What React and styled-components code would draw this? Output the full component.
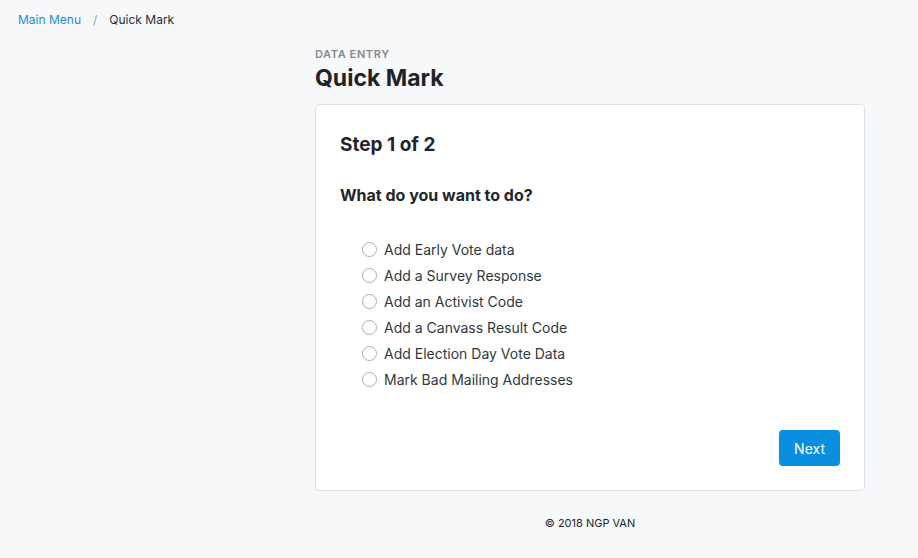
import React from "react";
import styled, { createGlobalStyle } from "styled-components";

const Global = createGlobalStyle`
  html, body { margin: 0; padding: 0; background: #f7f8fa; }
  body { font-family: Inter, "Noto Sans", "Liberation Sans", sans-serif; color: #22262a; }
`;

const Page = styled.div`
  min-height: 558px;
  background: #f7f8fa;
`;

const Breadcrumb = styled.nav`
  display: flex;
  align-items: center;
  gap: 12px;
  padding: 13px 18px 0;
  font-size: 12px;
  line-height: 14px;
`;

const Crumb = styled.span`
  color: ${(p) => (p.$link ? "#1a8cdb" : "#2a2d31")};
`;

const Sep = styled.span`
  color: #9aa0a6;
`;

const Column = styled.main`
  width: 550px;
  margin-left: 315px;
  padding-top: 20px;
`;

const Eyebrow = styled.div`
  font-size: 11px;
  font-weight: 600;
  letter-spacing: 0.6px;
  color: #838a92;
  text-transform: uppercase;
  line-height: 14px;
`;

const Title = styled.h1`
  margin: 2px 0 11px;
  font-size: 23px;
  font-weight: 700;
  line-height: 30px;
  color: #1f2327;
`;

const Card = styled.section`
  background: #fff;
  border: 1px solid #dde1e6;
  border-radius: 4px;
`;

const CardHeader = styled.div`
  padding: 28px 24px 0;
  height: 53px;
  box-sizing: border-box;
`;

const StepTitle = styled.h2`
  margin: 0;
  font-size: 19px;
  font-weight: 700;
  line-height: 24px;
  color: #22262a;
`;

const CardBody = styled.div`
  padding: 27px 24px 24px;
`;

const Question = styled.h3`
  margin: 0 0 31px;
  font-size: 16px;
  font-weight: 700;
  line-height: 20px;
  color: #22262a;
`;

const Options = styled.div`
  display: flex;
  flex-direction: column;
  padding-left: 22px;
`;

const Option = styled.label`
  display: flex;
  align-items: center;
  gap: 7px;
  height: 26px;
  font-size: 14px;
  color: #33373b;
  cursor: pointer;
`;

const Radio = styled.span`
  width: 13px;
  height: 13px;
  border: 1px solid #a9adb2;
  border-radius: 50%;
  background: #fff;
  flex: none;
`;

const Actions = styled.div`
  display: flex;
  justify-content: flex-end;
  margin-top: 38px;
`;

const Button = styled.button`
  height: 36px;
  padding: 0 15px;
  border: none;
  border-radius: 4px;
  background: #0a8fe0;
  color: #fff;
  font-family: inherit;
  font-size: 14px;
  cursor: pointer;
`;

const Footer = styled.footer`
  text-align: center;
  font-size: 11px;
  color: #22262a;
  padding-top: 25px;
  line-height: 14px;
`;

const options = [
  "Add Early Vote data",
  "Add a Survey Response",
  "Add an Activist Code",
  "Add a Canvass Result Code",
  "Add Election Day Vote Data",
  "Mark Bad Mailing Addresses",
];

export default function App() {
  return (
    <Page>
      <Global />
      <Breadcrumb>
        <Crumb $link>Main Menu</Crumb>
        <Sep>/</Sep>
        <Crumb>Quick Mark</Crumb>
      </Breadcrumb>
      <Column>
        <Eyebrow>Data Entry</Eyebrow>
        <Title>Quick Mark</Title>
        <Card>
          <CardHeader>
            <StepTitle>Step 1 of 2</StepTitle>
          </CardHeader>
          <CardBody>
            <Question>What do you want to do?</Question>
            <Options>
              {options.map((o) => (
                <Option key={o}>
                  <Radio />
                  {o}
                </Option>
              ))}
            </Options>
            <Actions>
              <Button>Next</Button>
            </Actions>
          </CardBody>
        </Card>
        <Footer>© 2018 NGP VAN</Footer>
      </Column>
    </Page>
  );
}
